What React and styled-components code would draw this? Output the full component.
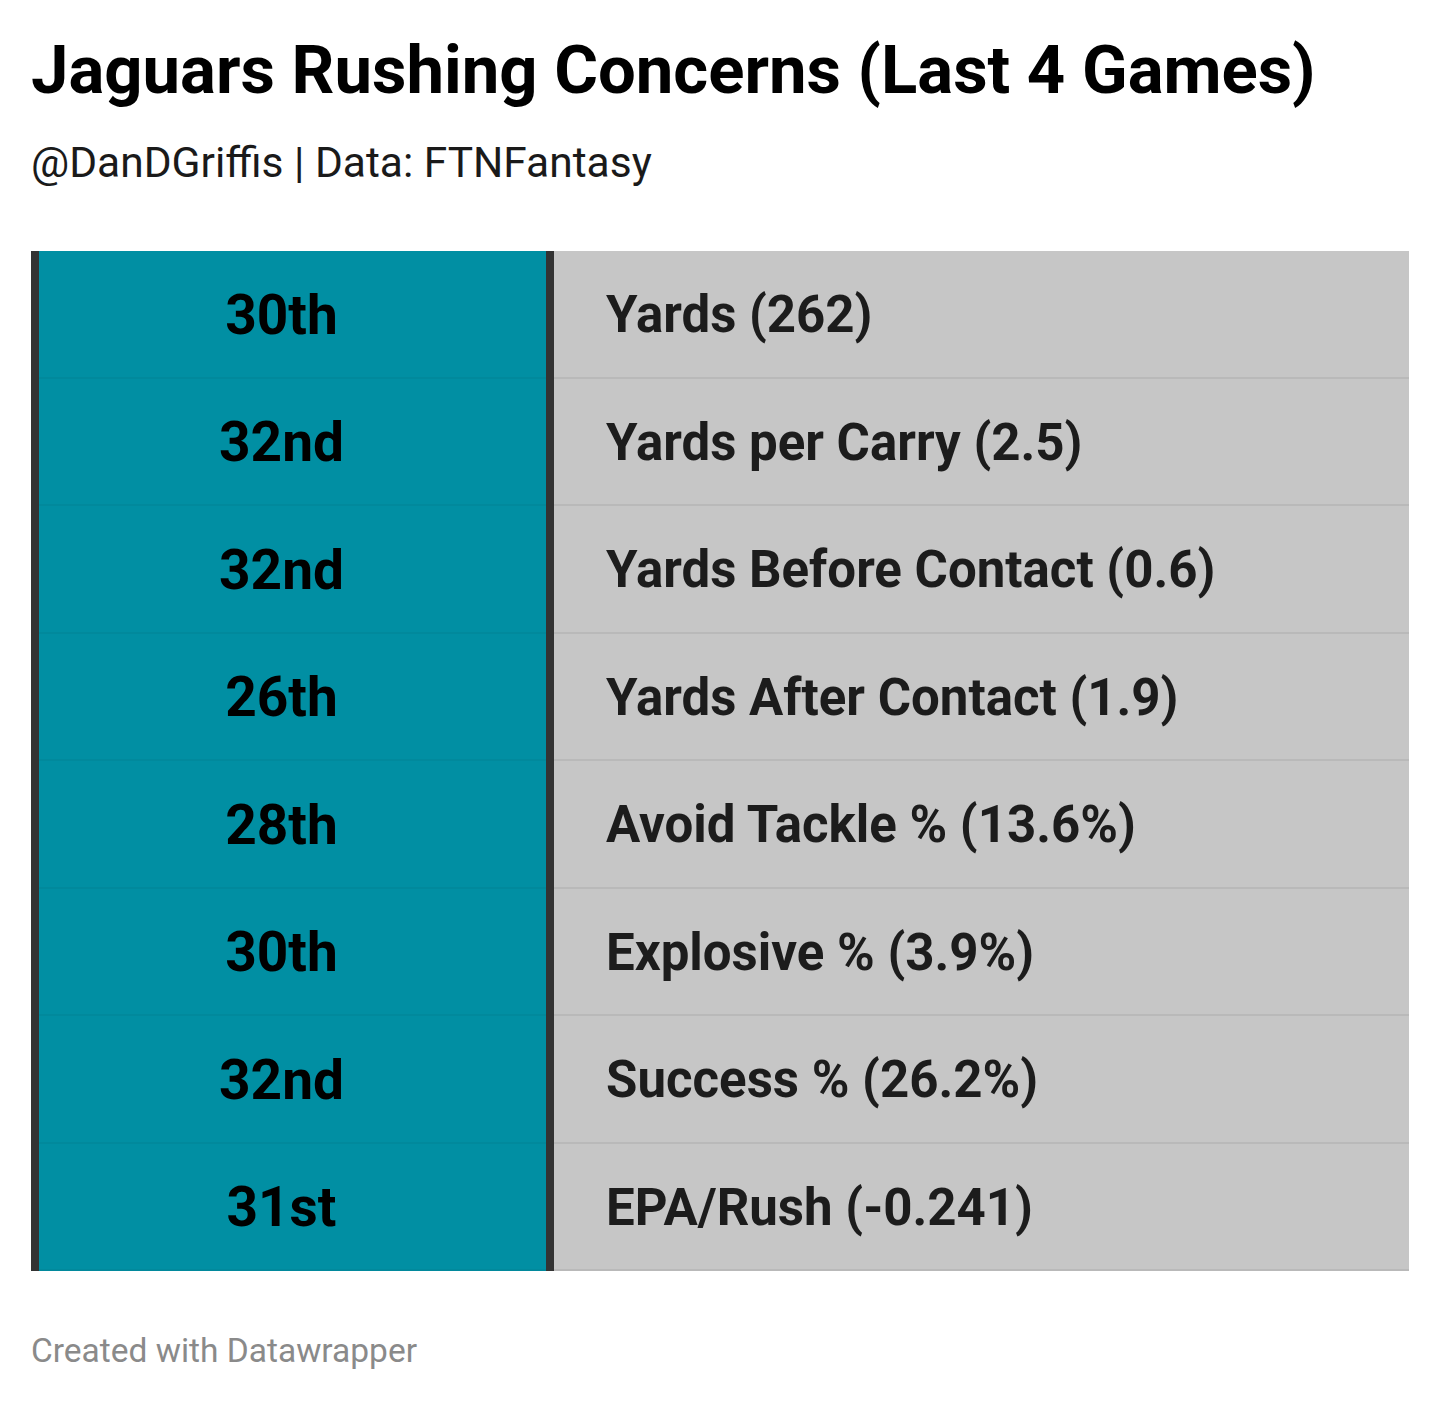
import styled, { createGlobalStyle } from "styled-components";

const GlobalStyle = createGlobalStyle`
  body {
    margin: 0;
    background: #ffffff;
    font-family: Roboto, "Liberation Sans", sans-serif;
  }
`

const rows = [
  { rank: "30th", label: "Yards (262)" },
  { rank: "32nd", label: "Yards per Carry (2.5)" },
  { rank: "32nd", label: "Yards Before Contact (0.6)" },
  { rank: "26th", label: "Yards After Contact (1.9)" },
  { rank: "28th", label: "Avoid Tackle % (13.6%)" },
  { rank: "30th", label: "Explosive % (3.9%)" },
  { rank: "32nd", label: "Success % (26.2%)" },
  { rank: "31st", label: "EPA/Rush (-0.241)" },
]

export default function App() {
  return (
    <Page>
      <GlobalStyle />
      <Title>Jaguars Rushing Concerns (Last 4 Games)</Title>
      <Subtitle>@DanDGriffis | Data: FTNFantasy</Subtitle>
      <Table>
        {rows.map((row, i) => (
          <Row key={i}>
            <RankCell>{row.rank}</RankCell>
            <LabelCell>{row.label}</LabelCell>
          </Row>
        ))}
      </Table>
      <Footer>Created with Datawrapper</Footer>
    </Page>
  )
}

const Page = styled.div`
  width: 1378px;
  padding: 30px 31px 0 31px;
  height: 1373px;
`

const Title = styled.h1`
  margin: 0;
  font-size: 67px;
  line-height: 80px;
  font-weight: 700;
  color: #000000;
`

const Subtitle = styled.div`
  margin-top: 26px;
  font-size: 42.5px;
  line-height: 54px;
  font-weight: 400;
  color: #1a1a1a;
`

const Table = styled.div`
  margin-top: 61px;
  display: flex;
  flex-direction: column;
`

const Row = styled.div`
  display: grid;
  grid-template-columns: 523px 1fr;
  height: 127.5px;
  box-sizing: border-box;
`

const RankCell = styled.div`
  display: flex;
  align-items: center;
  justify-content: center;
  box-sizing: border-box;
  background: #018fa3;
  border-left: 8px solid #333333;
  border-right: 8px solid #333333;
  padding-right: 22px;
  font-size: 55px;
  font-weight: 700;
  color: #000000;
  box-shadow: inset 0 -2px 0 #01899c;
`

const LabelCell = styled.div`
  display: flex;
  align-items: center;
  background: #c6c6c6;
  padding-left: 52px;
  font-size: 51px;
  font-weight: 700;
  color: #1c1c1c;
  box-shadow: inset 0 -2px 0 #b9b9b9;
`

const Footer = styled.div`
  margin-top: 60px;
  font-size: 33.5px;
  line-height: 40px;
  color: #8a8a8a;
`
